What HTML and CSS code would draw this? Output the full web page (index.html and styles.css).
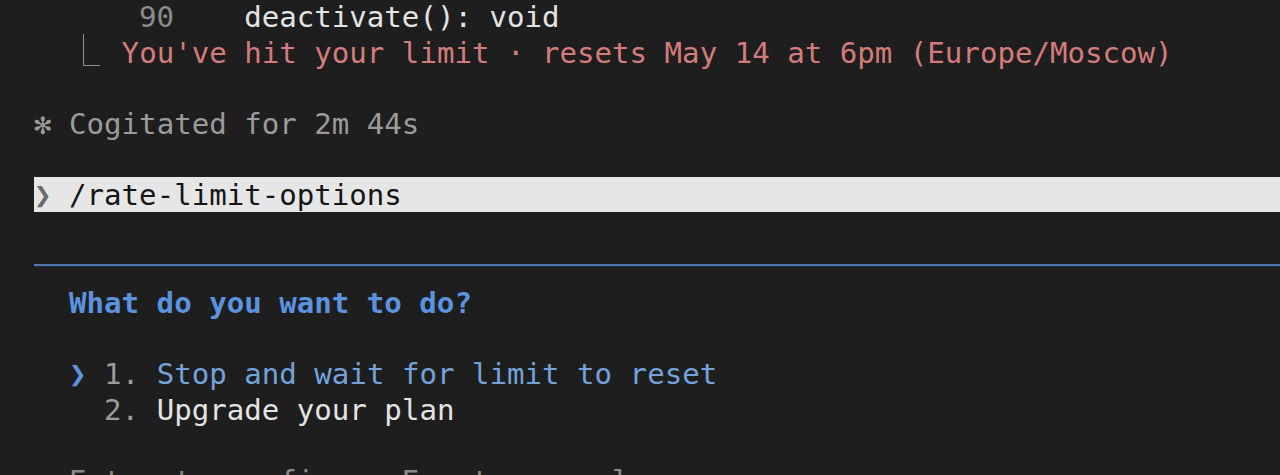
FILE: index.html
```html
<!DOCTYPE html>
<html lang="en">
<head>
<meta charset="utf-8">
<title>Terminal</title>
<link rel="stylesheet" href="styles.css">
</head>
<body>
<main class="term">
  <div class="row"><span class="dim">      90</span>    <span class="fg">deactivate(): void</span></div>
  <div class="row">  <span class="elbow"></span>  <span class="err">You've hit your limit · resets May 14 at 6pm (Europe/Moscow)</span></div>
  <div class="row"> </div>
  <div class="row muted"><span class="star">✻</span> Cogitated for 2m 44s</div>
  <div class="row"> </div>
  <div class="row prompt"><span class="caret">❯</span> /rate-limit-options</div>
  <div class="row"> </div>
  <div class="row sep"><span class="rule"></span></div>
  <div class="row title">  What do you want to do?</div>
  <div class="row"> </div>
  <div class="row">  <span class="sel">❯</span> <span class="num">1.</span> <span class="opt-sel">Stop and wait for limit to reset</span></div>
  <div class="row">    <span class="num">2.</span> <span class="fg">Upgrade your plan</span></div>
  <div class="row"> </div>
  <div class="row hint">  Enter to confirm · Esc to cancel</div>
</main>
</body>
</html>
```

FILE: styles.css
```css
html, body {
  margin: 0;
  padding: 0;
  background: #1e1e1e;
  height: 100%;
  overflow: hidden;
}

.term {
  margin-top: -1.85px;
  padding-left: 34px;
  font-family: "DejaVu Sans Mono", "Liberation Mono", monospace;
  font-size: 29.1px;
  color: #e2e2e2;
}

.row {
  white-space: pre;
  height: 35.7px;
  line-height: 38px;
}

.dim { color: #8c8c8c; }
.fg { color: #e4e4e4; }
.err { color: #d47c7b; }
.muted { color: #9b9b9b; }
.star { color: #9b9b9b; }

.elbow {
  display: inline-block;
  width: 1ch;
  height: 35.7px;
  vertical-align: top;
  position: relative;
}
.elbow::before {
  content: "";
  position: absolute;
  left: 14px;
  top: 0;
  width: 16px;
  height: 31px;
  border-left: 1.5px solid #8e8e8e;
  border-bottom: 1.5px solid #8e8e8e;
}

.prompt {
  background: #e6e6e6;
  color: #151515;
  line-height: 37px;
}
.caret { color: #6c6c6c; }

.sep {
  display: flex;
  align-items: center;
}
.rule {
  flex: 1;
  height: 2px;
  background: #4f77ab;
  border-bottom: 1px solid #1d2b4a;
}

.title {
  color: #5b93e0;
  font-weight: bold;
}

.sel { color: #5b93e0; }
.num { color: #9c9c9c; }
.opt-sel { color: #74a2da; }

.hint { color: #8a8a8a; }
```
